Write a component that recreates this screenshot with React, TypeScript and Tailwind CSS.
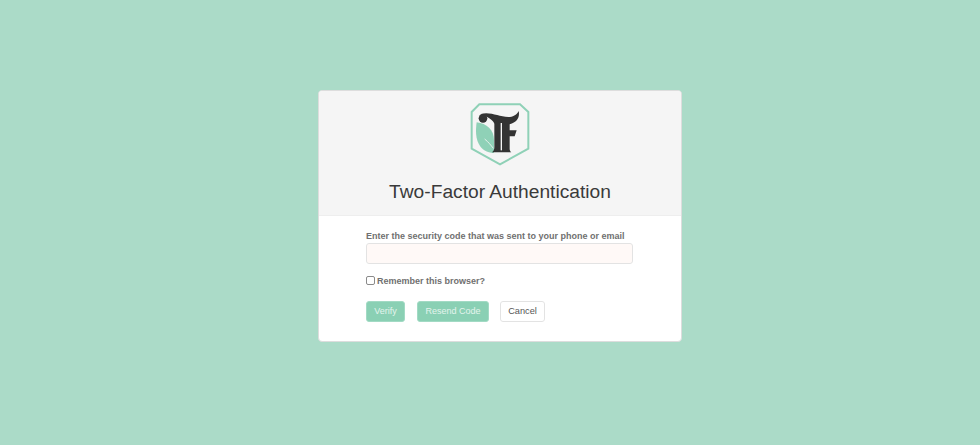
export default function App() {
  return (
    <div className="min-h-[445px] w-full bg-[#abdbc8] flex justify-center pl-[20px] pt-[90px] font-['Liberation_Sans',Arial,sans-serif]">
      <div className="w-[364px] h-[252px] bg-white border border-[#dddddd] rounded-[4px] overflow-hidden flex flex-col">
        <div className="h-[125px] bg-[#f5f5f5] border-b border-[#eeeeee] flex flex-col items-center pt-[11px]">
          <svg width="60" height="65" viewBox="90 35 180 195" className="block">
            <polygon points="118,42 240,42 265,65 265,175 180,222 95,175 95,65" fill="none" stroke="#8fd1b7" strokeWidth="6" />
            <path d="M110 96 C140 100 162 118 162 150 L162 188 C118 186 102 150 110 96 Z" fill="#8fd1b7" />
            <path d="M160 174 C152 164 146 156 134 146" stroke="#f5f5f5" strokeWidth="2.5" fill="none" />
            <circle cx="129" cy="84" r="13" fill="#333333" />
            <path d="M120 72 C150 62 175 80 205 80 C218 80 230 74 236 62 C240 80 232 96 209 102 L209 120 L230 120 L224 138 L209 138 L209 175 C209 180 211 183 214 186 L155 186 C161 183 163 178 163 170 L163 100 C158 88 142 78 120 72 Z" fill="#333333" />
            <rect x="182" y="98" width="4" height="82" fill="#f5f5f5" />
          </svg>
          <h1 className="mt-[12px] text-[19.2px] leading-[25px] text-[#3a3a3a] text-center font-normal">Two-Factor Authentication</h1>
        </div>
        <div className="flex-1 pl-[47px] pt-[15px]">
          <label className="block text-[9px] leading-[11px] font-bold text-[#707070]">Enter the security code that was sent to your phone or email</label>
          <input className="block mt-[1px] w-[267px] h-[21px] bg-[#fff9f7] border border-[#e3e3e3] rounded-[3px]" />
          <div className="mt-[11px] flex items-center h-[12px]">
            <span className="w-[9px] h-[9px] mb-[1px] border border-[#8a8a8a] rounded-[2px] bg-white" />
            <span className="ml-[2px] text-[9px] leading-[11px] font-bold text-[#707070]">Remember this browser?</span>
          </div>
          <div className="mt-[14px] flex">
            <button className="w-[39px] h-[21px] bg-[#8ad0b4] border border-[#a2dac4] rounded-[3px] text-[#e4f4ed] text-[9px]">Verify</button>
            <button className="ml-[12px] w-[72px] h-[21px] bg-[#8ad0b4] border border-[#a2dac4] rounded-[3px] text-[#e4f4ed] text-[9px]">Resend Code</button>
            <button className="ml-[11px] w-[45px] h-[21px] bg-white border border-[#e3e3e3] rounded-[3px] text-[#555555] text-[9.2px]">Cancel</button>
          </div>
        </div>
      </div>
    </div>
  );
}
